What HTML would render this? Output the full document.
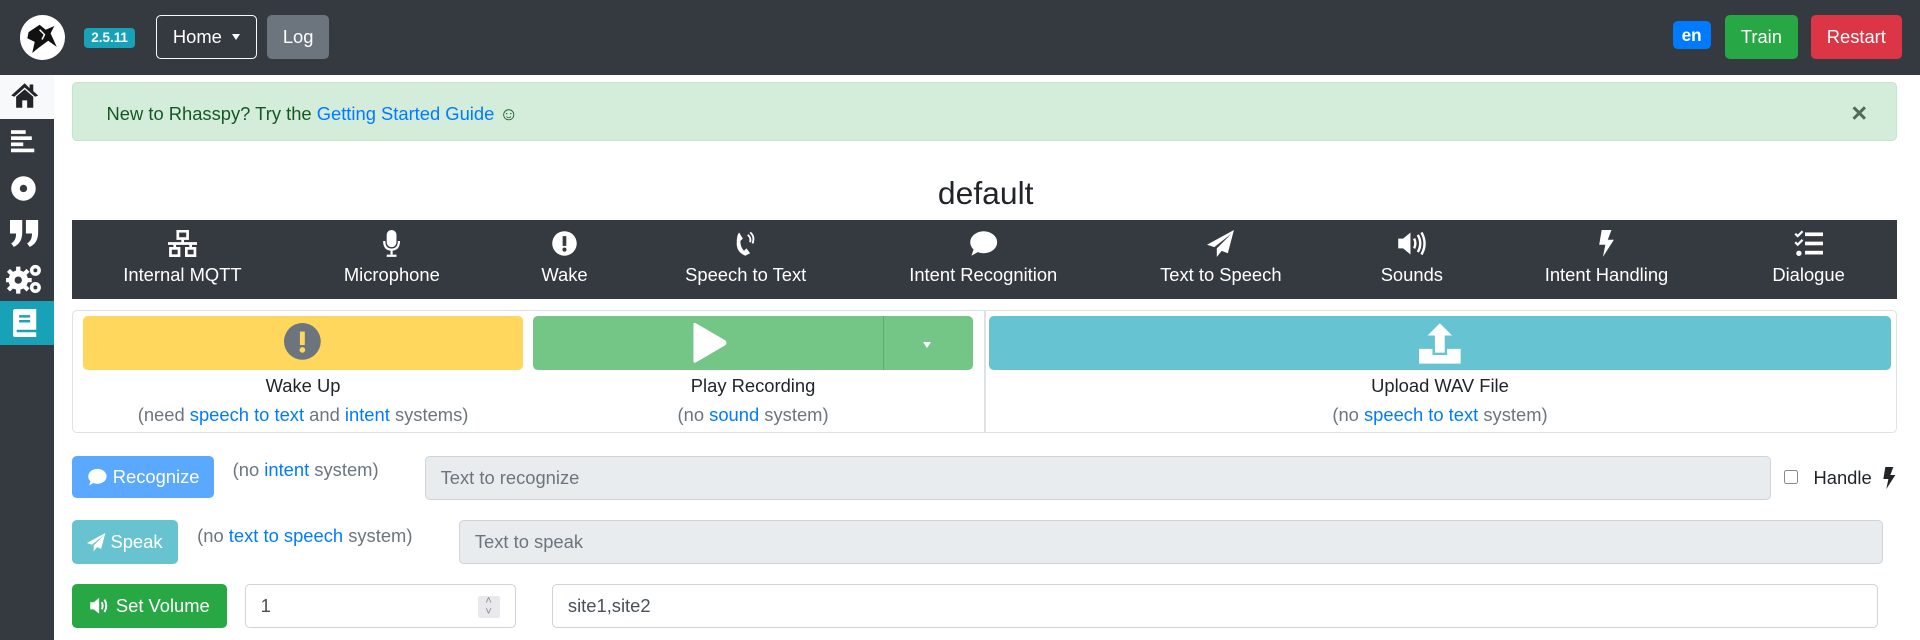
<!DOCTYPE html>
<html><head><meta charset="utf-8"><style>
html,body{margin:0;padding:0;background:#fff;overflow:hidden}
body{width:1920px;height:640px}
#w{zoom:1.22449;width:1568px;height:523px;position:relative;font-family:"Liberation Sans",sans-serif;font-size:15px;color:#212529}
.a{position:absolute}
.btn{position:absolute;border-radius:4px;color:#fff;display:flex;align-items:center;justify-content:center;font-size:15px;box-sizing:border-box}
.lnk{color:#007bff}
.g{color:#6c757d}
.tab{position:absolute;top:188px;width:180px;margin-left:-90px;text-align:center;color:#fff;font-size:15px}
.tab svg{display:block;margin:0 auto 6px;height:22px}
.inp{position:absolute;border:1px solid #ced4da;border-radius:4px;box-sizing:border-box;padding-left:12px;display:flex;align-items:center;font-size:15px;color:#6c757d}
.lbl{position:absolute;text-align:center;font-size:15px}
</style></head><body><div id="w">
<div class="a" style="left:0;top:0;width:1568px;height:61px;background:#343a40"></div>
<div class="a" style="left:16px;top:12px;width:37px;height:37px;border-radius:50%;background:#fff"></div>
<svg class="a" style="left:16px;top:12px" width="37" height="37" viewBox="0 0 37 37"><path d="M7 14 L16 8 L21 12 L28 9 L25 15 L30 26 L23 21 L15 27 L10 31 L12 22 L6 19Z" fill="#111"/><path d="M16 12 L20 16 L18 20" stroke="#fff" stroke-width="1.2" fill="none"/></svg>
<div class="a" style="left:69px;top:23px;width:41px;height:16px;background:#17a2b8;border-radius:3px;color:#fff;font-size:11px;font-weight:bold;text-align:center;line-height:16px">2.5.11</div>
<div class="btn" style="left:127px;top:12px;width:83px;height:36px;border:1px solid #f8f9fa">Home<span style="display:inline-block;margin-left:8px;border-left:4px solid transparent;border-right:4px solid transparent;border-top:5px solid #fff"></span></div>
<div class="btn" style="left:218px;top:12px;width:51px;height:36px;background:#6c757d">Log</div>
<div class="a" style="left:1366px;top:17px;width:31px;height:23px;background:#007bff;border-radius:4px;color:#fff;font-weight:bold;font-size:14px;text-align:center;line-height:23px">en</div>
<div class="btn" style="left:1409px;top:12px;width:59px;height:36px;background:#28a745">Train</div>
<div class="btn" style="left:1479px;top:12px;width:74px;height:36px;background:#dc3545">Restart</div>
<div class="a" style="left:0;top:61px;width:44px;height:462px;background:#343a40"></div>
<div class="a" style="left:0;top:61px;width:44px;height:36px;background:#f8f9fa"></div>
<svg class="a" style="left:8px;top:67px" width="24" height="22" viewBox="0 0 24 22"><path d="M12 1 L1 11 L3.5 12 L12 4.5 L20.5 12 L23 11 L19 7.5 V2 H16 V5 Z M5 12 V21 H10 V15 H14 V21 H19 V12 L12 6Z" fill="#212529"/></svg>
<svg class="a" style="left:9px;top:105px" width="20" height="22" viewBox="0 0 20 22"><g fill="#fff"><rect x="0" y="1" width="12" height="3"/><rect x="0" y="6" width="17" height="3"/><rect x="0" y="11" width="10" height="3"/><rect x="0" y="16" width="19" height="3"/></g></svg>
<svg class="a" style="left:8px;top:143px" width="22" height="22" viewBox="0 0 22 22"><circle cx="11" cy="11" r="10" fill="#fff"/><circle cx="11" cy="11" r="3" fill="#343a40"/></svg>
<svg class="a" style="left:8px;top:180px" width="24" height="22" viewBox="0 0 24 22"><g fill="#fff"><path d="M0 0H10V10Q10 19 3 22L1 19Q5 17 5 11H0Z"/><path d="M13 0H23V10Q23 19 16 22L14 19Q18 17 18 11H13Z"/></g></svg>
<svg class="a" style="left:5px;top:215px" width="30" height="26" viewBox="0 0 30 26"><g fill="#fff"><circle cx="10" cy="14" r="8"/><g stroke="#fff" stroke-width="3.5"><path d="M10 3V25M-1 14H21M2 6L18 22M18 6L2 22"/></g><circle cx="24" cy="6" r="4.5"/><circle cx="24" cy="20" r="4.5"/></g><circle cx="10" cy="14" r="3" fill="#343a40"/><circle cx="24" cy="6" r="1.6" fill="#343a40"/><circle cx="24" cy="20" r="1.6" fill="#343a40"/></svg>
<div class="a" style="left:0;top:246px;width:44px;height:36px;background:#17a2b8"></div>
<svg class="a" style="left:11px;top:252px" width="19" height="23" viewBox="0 0 19 23"><path d="M2 0 H19 V17 H3 V19 H19 V23 H2 Q0 23 0 21 V2 Q0 0 2 0Z" fill="#fff"/><rect x="5" y="5" width="9" height="2" fill="#17a2b8"/><rect x="5" y="9" width="9" height="2" fill="#17a2b8"/></svg>
<div class="a" style="left:59px;top:67px;width:1490px;height:48px;background:#d4edda;border:1px solid #c3e6cb;border-radius:4px;box-sizing:border-box"></div>
<div class="a" style="left:87px;top:84px;color:#155724">New to Rhasspy? Try the <span class="lnk">Getting Started Guide</span> ☺</div>
<div class="a" style="left:1512px;top:80px;color:#4d6b55;font-size:22px;font-weight:bold">×</div>
<div class="a" style="left:0;width:1610px;top:143px;text-align:center;font-size:26px">default</div>
<div class="a" style="left:59px;top:180px;width:1490px;height:64px;background:#343a40"></div>
<div class="tab" style="left:149px"><svg viewBox="0 0 24 22" width="24"><g fill="none" stroke="#fff" stroke-width="2.2"><rect x="8" y="1" width="8" height="6"/><rect x="2" y="15" width="7" height="6"/><rect x="15" y="15" width="7" height="6"/><path d="M12 7V11M0 11H24M5.5 11V15M18.5 11V15"/></g></svg>Internal MQTT</div>
<div class="tab" style="left:320px"><svg viewBox="0 0 14 22" width="14"><rect x="3" y="0" width="8" height="14" rx="4" fill="#fff"/><path d="M1 9Q1 16 7 16Q13 16 13 9M7 16V20M3 21H11" stroke="#fff" stroke-width="1.8" fill="none"/></svg>Microphone</div>
<div class="tab" style="left:461px"><svg viewBox="0 0 22 22" width="22"><circle cx="11" cy="11" r="10" fill="#fff"/><rect x="9.5" y="5" width="3" height="8" fill="#343a40"/><circle cx="11" cy="16" r="1.7" fill="#343a40"/></svg>Wake</div>
<div class="tab" style="left:609px"><svg viewBox="0 0 20 22" width="20"><path d="M5 2 L8 7 L6 9 Q6 14 9 17 L11 15 L14 19 L10 21 Q3 18 3 11 Q3 4 5 2Z" fill="#fff"/><path d="M12 4Q15 6 14 10M14 2Q18 5 16 11" stroke="#fff" stroke-width="1.5" fill="none"/></svg>Speech to Text</div>
<div class="tab" style="left:803px"><svg viewBox="0 0 24 22" width="24"><ellipse cx="12" cy="10" rx="11" ry="9" fill="#fff"/><path d="M4 15 L2 21 L9 17Z" fill="#fff"/></svg>Intent Recognition</div>
<div class="tab" style="left:997px"><svg viewBox="0 0 22 22" width="22"><path d="M22 0 L0 12 L6 14 L20 3 L8 15 V22 L12 17 L17 19Z" fill="#fff"/></svg>Text to Speech</div>
<div class="tab" style="left:1153px"><svg viewBox="0 0 24 22" width="24"><path d="M1 7H5L11 2V20L5 15H1Z" fill="#fff"/><path d="M14 7Q16 11 14 15M17 4Q21 11 17 18M20 2Q25 11 20 20" stroke="#fff" stroke-width="2" fill="none"/></svg>Sounds</div>
<div class="tab" style="left:1312px"><svg viewBox="0 0 14 22" width="14"><path d="M3 0H11L8 8H13L4 22L6 12H1Z" fill="#fff"/></svg>Intent Handling</div>
<div class="tab" style="left:1477px"><svg viewBox="0 0 24 22" width="24"><g fill="#fff"><rect x="9" y="2" width="15" height="3"/><rect x="9" y="9.5" width="15" height="3"/><rect x="9" y="17" width="15" height="3"/><circle cx="4" cy="19" r="2.2"/></g><path d="M1 3L3 5L7 1M1 10L3 12L7 8" stroke="#fff" stroke-width="1.8" fill="none"/></svg>Dialogue</div>
<div class="a" style="left:59px;top:253px;width:1490px;height:101px;border:1px solid #dee2e6;border-radius:4px;box-sizing:border-box"></div>
<div class="a" style="left:804px;top:253px;width:1px;height:101px;background:#dee2e6"></div>
<div class="a" style="left:68px;top:258px;width:359px;height:44px;background:#ffd75c;border-radius:4px"></div>
<svg class="a" style="left:232px;top:264px" width="30" height="30" viewBox="0 0 30 30"><circle cx="15" cy="15" r="15" fill="#6c757d"/><rect x="13" y="7" width="4" height="11" fill="#ffd75c"/><circle cx="15" cy="22" r="2.3" fill="#ffd75c"/></svg>
<div class="a" style="left:435px;top:258px;width:360px;height:44px;background:#73c686;border-radius:4px"></div>
<div class="a" style="left:721px;top:258px;width:1px;height:44px;background:#5fae70"></div>
<svg class="a" style="left:564px;top:263px" width="30" height="34" viewBox="0 0 30 34"><path d="M2 2 Q2 0 4 1 L28 15 Q30 17 28 19 L4 33 Q2 34 2 32Z" fill="#fff"/></svg>
<div class="a" style="left:754px;top:279px;border-left:4px solid transparent;border-right:4px solid transparent;border-top:5px solid #fff"></div>
<div class="a" style="left:808px;top:258px;width:736px;height:44px;background:#66c3d1;border-radius:4px"></div>
<svg class="a" style="left:1159px;top:263px" width="34" height="34" viewBox="0 0 34 34"><path d="M17 1 L27 11 H21 V25 H13 V11 H7Z" fill="#fff"/><path d="M0 22 H11 V27 H23 V22 H34 V34 H0Z" fill="#fff"/></svg>
<div class="lbl" style="left:68px;width:359px;top:306px">Wake Up</div>
<div class="lbl g" style="left:48px;width:399px;top:330px">(need <span class="lnk">speech to text</span> and <span class="lnk">intent</span> systems)</div>
<div class="lbl" style="left:435px;width:360px;top:306px">Play Recording</div>
<div class="lbl g" style="left:435px;width:360px;top:330px">(no <span class="lnk">sound</span> system)</div>
<div class="lbl" style="left:808px;width:736px;top:306px">Upload WAV File</div>
<div class="lbl g" style="left:808px;width:736px;top:330px">(no <span class="lnk">speech to text</span> system)</div>
<div class="btn" style="left:59px;top:372px;width:116px;height:35px;background:#5aa8ff"><svg width="17" height="15" viewBox="0 0 24 22" style="margin-right:4px"><ellipse cx="12" cy="10" rx="11" ry="9" fill="#fff"/><path d="M4 15 L2 21 L9 17Z" fill="#fff"/></svg>Recognize</div>
<div class="a g" style="left:190px;top:375px">(no <span class="lnk">intent</span> system)</div>
<div class="inp" style="left:347px;top:372px;width:1099px;height:36px;background:#e9ecef">Text to recognize</div>
<div class="a" style="left:1457px;top:384px;width:11px;height:11px;border:1px solid #888;border-radius:2px;box-sizing:border-box"></div>
<div class="a" style="left:1481px;top:381px">Handle</div>
<svg class="a" style="left:1537px;top:381px" width="12" height="18" viewBox="0 0 14 22"><path d="M3 0H11L8 8H13L4 22L6 12H1Z" fill="#212529"/></svg>
<div class="btn" style="left:59px;top:425px;width:86px;height:36px;background:#68c3d0"><svg width="15" height="15" viewBox="0 0 22 22" style="margin-right:4px"><path d="M22 0 L0 12 L6 14 L20 3 L8 15 V22 L12 17 L17 19Z" fill="#fff"/></svg>Speak</div>
<div class="a g" style="left:161px;top:429px">(no <span class="lnk">text to speech</span> system)</div>
<div class="inp" style="left:375px;top:425px;width:1163px;height:36px;background:#e9ecef">Text to speak</div>
<div class="btn" style="left:59px;top:477px;width:126px;height:36px;background:#28a745"><svg width="18" height="16" viewBox="0 0 24 22" style="margin-right:4px"><path d="M1 7H5L11 2V20L5 15H1Z" fill="#fff"/><path d="M14 7Q16 11 14 15M17 4Q21 11 17 18" stroke="#fff" stroke-width="2.2" fill="none"/></svg>Set Volume</div>
<div class="inp" style="left:200px;top:477px;width:221px;height:36px;color:#495057">1</div>
<div class="a" style="left:390px;top:487px;width:18px;height:18px;background:#e9e9ed;border-radius:2px;color:#888;font-size:9px;text-align:center;line-height:9px">˄<br>˅</div>
<div class="inp" style="left:451px;top:477px;width:1083px;height:36px;color:#495057">site1,site2</div>
</div></body></html>
